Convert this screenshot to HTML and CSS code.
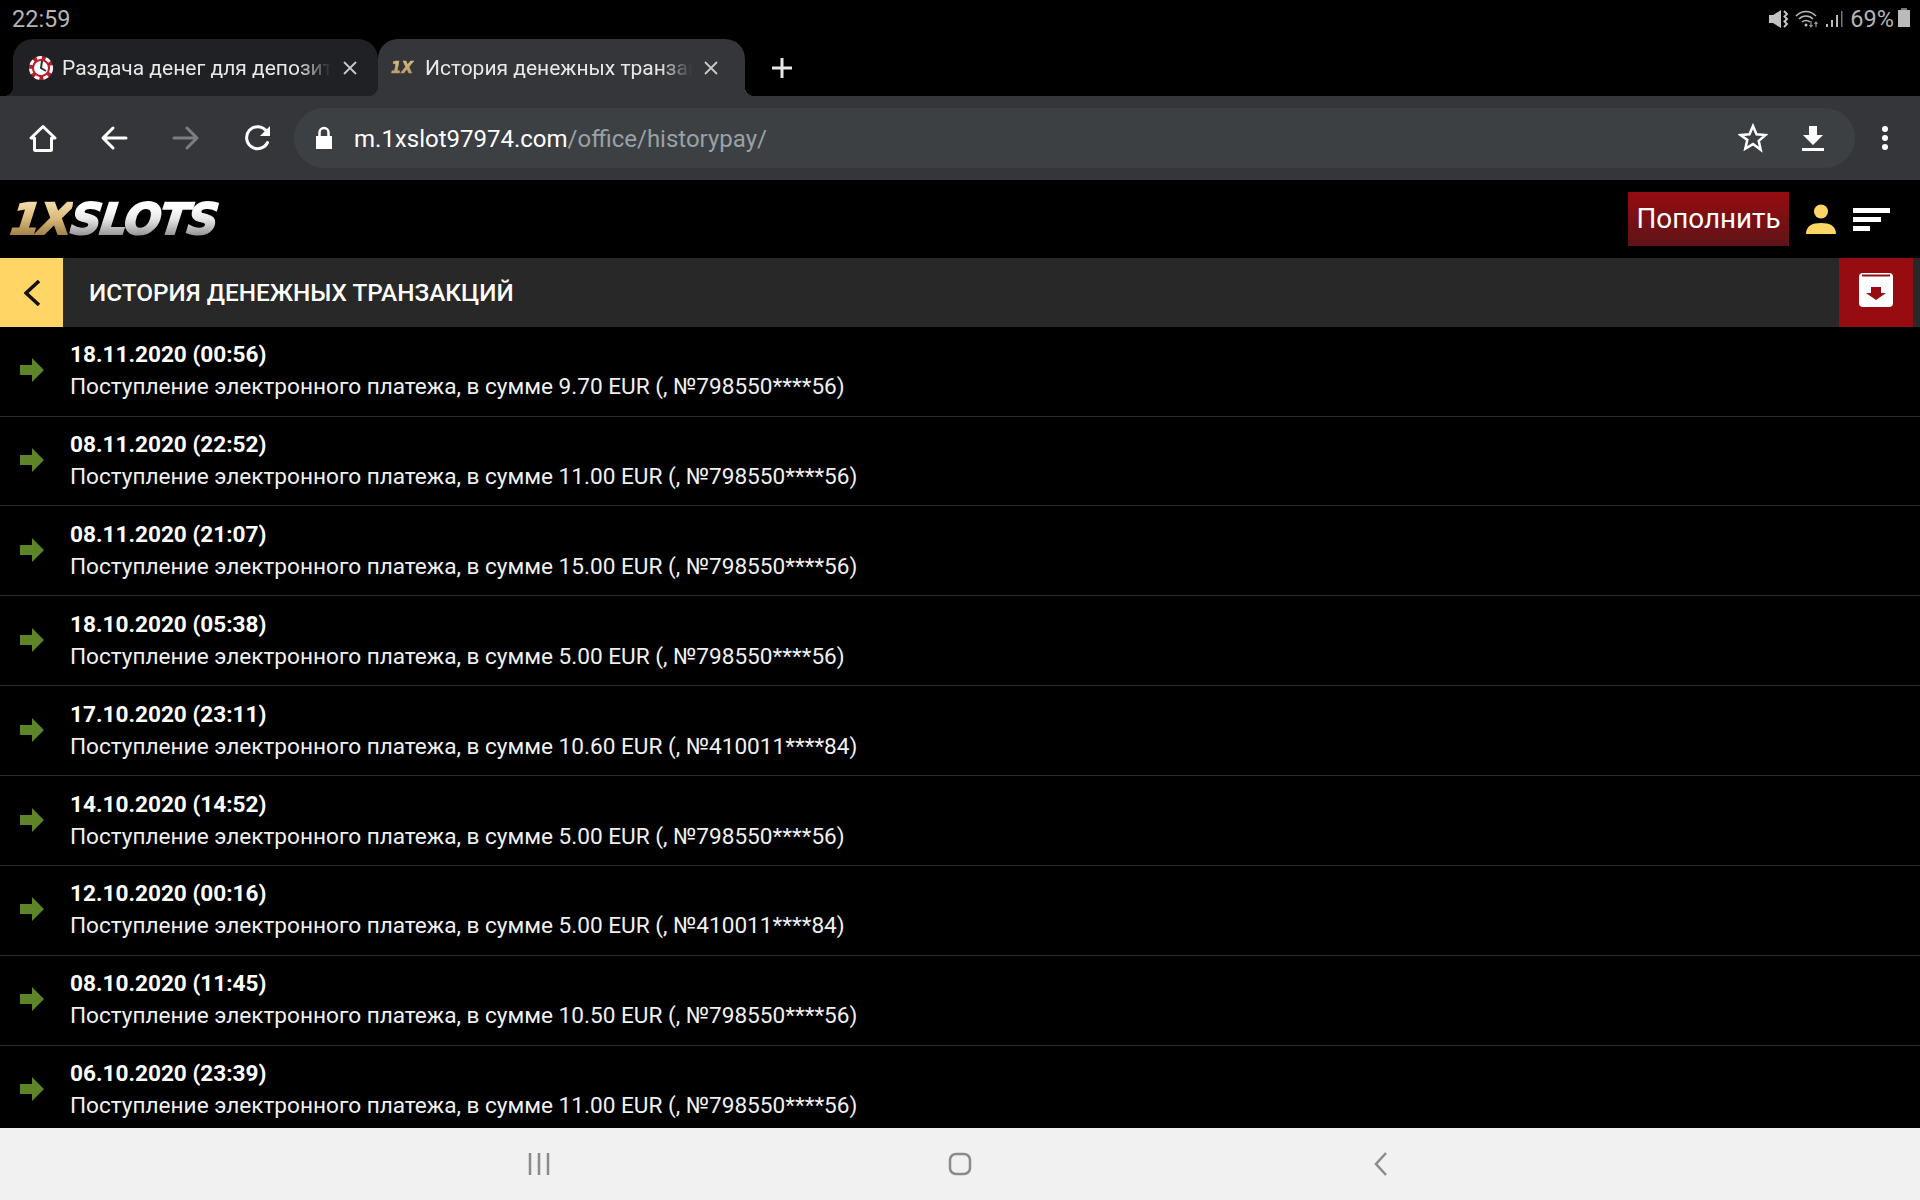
FILE: index.html
```html
<!DOCTYPE html>
<html lang="ru">

<head>
    <meta charset="UTF-8">
    <title>История денежных транзакций</title>
    <link rel="stylesheet" href="styles.css">
</head>

<body>
    <div class="screen">

        <!-- status bar -->
        <div class="status">
            <span class="clock">22:59</span>
            <div class="status_right">
                <svg class="st_mute" viewBox="0 0 20 18"><path d="M0 5h4l8-5v18l-8-5H0z" fill="#c4c4c4"/><path d="M15 1l3 3-2.500 2.500 2.500 2.500-2.500 2.500 2.500 2.500-3 3" fill="none" stroke="#c4c4c4" stroke-width="2"/></svg>
                <svg class="st_wifi" viewBox="0 0 24 18"><path d="M1 6c6-6 14-6 20 0M4 9c4-4 10-4 14 0M7 12c2.500-2 5.500-2 8 0" fill="none" stroke="#bbb" stroke-width="1.500"/><circle cx="11" cy="15" r="1.500" fill="#bbb"/><path d="M16 11v6M14.500 15l1.500 2 1.500-2M21 17v-5M19.500 14l1.500-2 1.500 2" fill="none" stroke="#999" stroke-width="1.200"/></svg>
                <svg class="st_signal" viewBox="0 0 18 18"><path d="M1 14h2v3H1zM6 10h2v7H6zM11 5h2v12h-2z" fill="#bbb"/><path d="M16 1h1.500v16H16z" fill="#777"/></svg>
                <span class="battery_pct">69%</span>
                <span class="battery"></span>
            </div>
        </div>

        <!-- browser tabs -->
        <div class="tabs">
            <div class="tab">
                <svg class="favicon" viewBox="0 0 24 24">
                    <circle cx="12" cy="12" r="12" fill="#b3202c"/>
                    <circle cx="12" cy="12" r="10.500" fill="none" stroke="#fff" stroke-width="3" stroke-dasharray="5 4"/>
                    <circle cx="12" cy="12" r="7" fill="#fff"/>
                    <path d="M13 5l-1 7 5 3" fill="none" stroke="#333" stroke-width="2"/>
                </svg>
                <span class="tab_title">Раздача денег для депозит</span>
                <svg class="tab_close" viewBox="0 0 16 16"><path d="M2 2l12 12M14 2L2 14"/></svg>
            </div>
            <div class="tab active">
                <span class="favicon_x">1X</span>
                <span class="tab_title">История денежных транзак</span>
                <svg class="tab_close" viewBox="0 0 16 16"><path d="M2 2l12 12M14 2L2 14"/></svg>
            </div>
            <svg class="tab_new" viewBox="0 0 22 22"><path d="M11 1v20M1 11h20"/></svg>
        </div>

        <!-- browser toolbar -->
        <div class="toolbar">
            <svg class="tool" viewBox="0 0 30 30"><path d="M16 3.500L4 15h3.500v11.500a1 1 0 0 0 1 1h15a1 1 0 0 0 1-1V15H28z"/></svg>
            <svg class="tool" viewBox="0 0 30 30"><path d="M27 15H5M14 5L4 15l10 10"/></svg>
            <svg class="tool dim" viewBox="0 0 30 30"><path d="M3 15h22M16 5l10 10-10 10"/></svg>
            <svg class="tool" viewBox="0 0 30 30"><path d="M24.500 19.500A11 11 0 1 1 23 7.500"/><path class="solid" d="M27 3v10H17z"/></svg>
            <div class="omnibox">
                <svg class="lock" viewBox="0 0 18 24"><path d="M1 10h16v13H1z"/><path class="ring" d="M4.500 10V6.500a4.500 4.500 0 0 1 9 0V10"/></svg>
                <span class="url">m.1xslot97974.com<span class="url_path">/office/historypay/</span></span>
                <svg class="star" viewBox="0 0 30 30"><path d="M15 3l3.500 8.300 9 .7-6.800 5.900 2 8.800L15 21.100l-7.700 4.600 2-8.800L2.500 12l9-.7z"/></svg>
                <svg class="dl" viewBox="0 0 24 28"><path d="M8 2h8v9h6L12 21 2 11h6zM1 24h22v3H1z"/></svg>
            </div>
            <div class="kebab"><i></i><i></i><i></i></div>
        </div>

        <!-- site header -->
        <header class="site_head">
            <div class="logo"><span class="logo_x">1X</span><span class="logo_s">SLOTS</span></div>
            <div class="head_right">
                <button class="btn_topup">Пополнить</button>
                <svg class="user" viewBox="0 0 30 30"><circle cx="15" cy="7.500" r="7"/><path d="M0 30c0-8 6-11 15-11s15 3 15 11z"/></svg>
                <div class="menu"><i></i><i></i><i></i></div>
            </div>
        </header>

        <div class="title_bar">
            <div class="back">
                <svg viewBox="0 0 16 26"><path d="M15 1L2 13l13 12"/></svg>
            </div>
            <h1>ИСТОРИЯ ДЕНЕЖНЫХ ТРАНЗАКЦИЙ</h1>
            <div class="archive">
                <svg viewBox="0 0 34 34"><path class="box" d="M4 0h26a4 4 0 0 1 4 4v26a4 4 0 0 1-4 4H4a4 4 0 0 1-4-4V4a4 4 0 0 1 4-4z"/><path class="mark" d="M3 1.500h28v2H3zM12 14h10v6h5L17 27 7 20h5z"/></svg>
            </div>
        </div>

        <!-- transactions -->
        <div class="list">
            <div class="row">
                <svg class="arrow" viewBox="0 0 24 24"><path d="M0 7h12V0l12 12-12 12v-7H0z"/></svg>
                <div>
                    <div class="date">18.11.2020 (00:56)</div>
                    <div class="desc">Поступление электронного платежа, в сумме 9.70 EUR (, №798550****56)</div>
                </div>
            </div>
            <div class="row">
                <svg class="arrow" viewBox="0 0 24 24"><path d="M0 7h12V0l12 12-12 12v-7H0z"/></svg>
                <div>
                    <div class="date">08.11.2020 (22:52)</div>
                    <div class="desc">Поступление электронного платежа, в сумме 11.00 EUR (, №798550****56)</div>
                </div>
            </div>
            <div class="row">
                <svg class="arrow" viewBox="0 0 24 24"><path d="M0 7h12V0l12 12-12 12v-7H0z"/></svg>
                <div>
                    <div class="date">08.11.2020 (21:07)</div>
                    <div class="desc">Поступление электронного платежа, в сумме 15.00 EUR (, №798550****56)</div>
                </div>
            </div>
            <div class="row">
                <svg class="arrow" viewBox="0 0 24 24"><path d="M0 7h12V0l12 12-12 12v-7H0z"/></svg>
                <div>
                    <div class="date">18.10.2020 (05:38)</div>
                    <div class="desc">Поступление электронного платежа, в сумме 5.00 EUR (, №798550****56)</div>
                </div>
            </div>
            <div class="row">
                <svg class="arrow" viewBox="0 0 24 24"><path d="M0 7h12V0l12 12-12 12v-7H0z"/></svg>
                <div>
                    <div class="date">17.10.2020 (23:11)</div>
                    <div class="desc">Поступление электронного платежа, в сумме 10.60 EUR (, №410011****84)</div>
                </div>
            </div>
            <div class="row">
                <svg class="arrow" viewBox="0 0 24 24"><path d="M0 7h12V0l12 12-12 12v-7H0z"/></svg>
                <div>
                    <div class="date">14.10.2020 (14:52)</div>
                    <div class="desc">Поступление электронного платежа, в сумме 5.00 EUR (, №798550****56)</div>
                </div>
            </div>
            <div class="row">
                <svg class="arrow" viewBox="0 0 24 24"><path d="M0 7h12V0l12 12-12 12v-7H0z"/></svg>
                <div>
                    <div class="date">12.10.2020 (00:16)</div>
                    <div class="desc">Поступление электронного платежа, в сумме 5.00 EUR (, №410011****84)</div>
                </div>
            </div>
            <div class="row">
                <svg class="arrow" viewBox="0 0 24 24"><path d="M0 7h12V0l12 12-12 12v-7H0z"/></svg>
                <div>
                    <div class="date">08.10.2020 (11:45)</div>
                    <div class="desc">Поступление электронного платежа, в сумме 10.50 EUR (, №798550****56)</div>
                </div>
            </div>
            <div class="row">
                <svg class="arrow" viewBox="0 0 24 24"><path d="M0 7h12V0l12 12-12 12v-7H0z"/></svg>
                <div>
                    <div class="date">06.10.2020 (23:39)</div>
                    <div class="desc">Поступление электронного платежа, в сумме 11.00 EUR (, №798550****56)</div>
                </div>
            </div>
        </div>

        <!-- android nav -->
        <div class="navbar">
            <svg class="nav_icon" viewBox="0 0 24 26"><path d="M3 2v22M12 2v22M21 2v22"/></svg>
            <svg class="nav_icon" viewBox="0 0 24 26"><rect x="2" y="3" width="20" height="20" rx="6"/></svg>
            <svg class="nav_icon" viewBox="0 0 24 26"><path d="M17 2L7 13l10 11"/></svg>
        </div>
    </div>
</body>

</html>
```

FILE: styles.css
```css
* {
    box-sizing: border-box;
}

body {
    margin: 0;
    background-color: #000;
    color: #fff;
    font-family: Roboto, "Liberation Sans", sans-serif;
}

.screen {
    display: flex;
    flex-direction: column;
    height: 1200px;
    overflow: hidden;
}

/* Status bar */
.status {
    display: flex;
    justify-content: space-between;
    align-items: center;
    height: 39px;
    padding: 0 10px 2px 12px;
    color: #b5b5b5;
    font-size: 23.500px;
}

.status_right {
    display: flex;
    align-items: center;
}

.st_mute {
    width: 20px;
    height: 18px;
    margin-right: 6px;
}

.st_wifi {
    width: 24px;
    height: 18px;
    margin-right: 6px;
}

.st_signal {
    width: 18px;
    height: 18px;
    margin-right: 7px;
}

.battery_pct {
    margin-right: 4px;
}

.battery {
    position: relative;
    display: block;
    width: 12px;
    height: 17px;
    background-color: #bbb;
}

.battery::before {
    content: "";
    position: absolute;
    left: 3px;
    top: -2px;
    width: 6px;
    height: 2px;
    background-color: #777;
}

/* Tabs */
.tabs {
    display: flex;
    align-items: flex-end;
    height: 57px;
    padding-left: 13px;
}

.tab {
    position: relative;
    display: flex;
    align-items: center;
    width: 365px;
    height: 57px;
    padding: 0 20px 0 16px;
    background-color: #202124;
    border-radius: 20px 20px 0 0;
}

/* little flares at the foot of a tab */
.tab::before,
.tab::after {
    content: "";
    position: absolute;
    bottom: 0;
    width: 10px;
    height: 10px;
}

.tab::before {
    left: -10px;
    background: radial-gradient(circle at 0 0, transparent 10px, #202124 10.500px);
}

.tab.active {
    width: 367px;
    padding: 0 26px 0 13px;
    background-color: #35363a;
}

.tab.active::before {
    background: radial-gradient(circle at 0 0, transparent 10px, #35363a 10.500px);
}

.tab.active::after {
    right: -10px;
    background: radial-gradient(circle at 100% 0, transparent 10px, #35363a 10.500px);
}

.favicon {
    flex: none;
    width: 24px;
    height: 24px;
    margin-right: 9px;
}

.favicon_x {
    flex: none;
    width: 25px;
    margin-right: 9px;
    background: linear-gradient(to bottom, #dcbf85, #b8955a);
    -webkit-background-clip: text;
    background-clip: text;
    color: transparent;
    font-family: "DejaVu Sans", sans-serif;
    font-size: 15px;
    font-weight: 700;
    font-style: italic;
    -webkit-text-stroke: 0.600px transparent;
}

.tab_title {
    flex: 1;
    overflow: hidden;
    white-space: nowrap;
    font-size: 21px;
    color: #e8e8e8;
    -webkit-mask-image: linear-gradient(to right, #000 88%, transparent 100%);
    mask-image: linear-gradient(to right, #000 88%, transparent 100%);
}

.tab_close {
    flex: none;
    width: 16px;
    height: 16px;
    margin-left: 11px;
    fill: none;
    stroke: #c8c8c8;
    stroke-width: 1.800;
}

.tab_new {
    width: 22px;
    height: 22px;
    margin: 0 0 17px 26px;
    fill: none;
    stroke: #e8e8e8;
    stroke-width: 3;
}

/* Toolbar */
.toolbar {
    display: flex;
    align-items: center;
    height: 84px;
    padding: 0 32px 0 27px;
    background-color: #35363a;
}

.tool {
    flex: none;
    width: 30px;
    height: 30px;
    margin-right: 42px;
    fill: none;
    stroke: #fff;
    stroke-width: 3;
    stroke-linecap: round;
    stroke-linejoin: round;
}

.tool.dim {
    stroke: #7c7d80;
}

.tool:nth-child(4) {
    margin-right: 21px;
}

.tool .solid {
    fill: #fff;
    stroke: none;
}

.omnibox {
    display: flex;
    align-items: center;
    flex: 1;
    height: 60px;
    padding: 0 30px 0 21px;
    background-color: #3c4043;
    border-radius: 30px;
}

.lock {
    flex: none;
    width: 18px;
    height: 24px;
    margin-right: 21px;
    fill: #fff;
}

.lock .ring {
    fill: none;
    stroke: #fff;
    stroke-width: 2.500;
}

.url {
    flex: 1;
    padding-top: 2px;
    font-size: 24px;
    color: #fff;
}

.url_path {
    color: #9aa0a6;
}

.star {
    width: 30px;
    height: 30px;
    margin-right: 33px;
    fill: none;
    stroke: #fff;
    stroke-width: 2.500;
}

.dl {
    width: 24px;
    height: 28px;
    fill: #fff;
}

.kebab {
    display: flex;
    flex-direction: column;
    gap: 3px;
    margin-left: 27px;
}

.kebab i {
    display: block;
    width: 6px;
    height: 6px;
    border-radius: 50%;
    background-color: #fff;
}

/* Site header */
.site_head {
    display: flex;
    justify-content: space-between;
    align-items: center;
    height: 78px;
    padding: 0 30px 0 11px;
}

.logo {
    transform: skewX(-7deg);
    font-family: "DejaVu Sans", sans-serif;
    font-size: 43px;
    font-weight: 700;
    font-style: italic;
    letter-spacing: -1.500px;
    -webkit-text-stroke: 2px transparent;
}

.logo_x {
    background: linear-gradient(to bottom, #f0d9a6 20%, #d9b878 50%, #9c7c45 85%);
    -webkit-background-clip: text;
    background-clip: text;
    color: transparent;
}

.logo_s {
    background: linear-gradient(to bottom, #fff 25%, #e8e8e8 50%, #8f8f8f 85%);
    -webkit-background-clip: text;
    background-clip: text;
    color: transparent;
}

.head_right {
    display: flex;
    align-items: center;
}

.btn_topup {
    width: 161px;
    height: 54px;
    padding: 0 0 2px;
    border: none;
    background: linear-gradient(to bottom, #960c10, #5e1418);
    color: #fff;
    font-family: inherit;
    font-size: 27.800px;
}

.user {
    width: 30px;
    height: 30px;
    margin: 0 17px;
    fill: #ffd666;
}

.menu {
    display: flex;
    flex-direction: column;
    gap: 4px;
    width: 37px;
}

.menu i {
    display: block;
    height: 5px;
    background-color: #fff;
}

.menu i:nth-child(2) {
    width: 28px;
}

.menu i:nth-child(3) {
    width: 17px;
}

/* Title bar */
.title_bar {
    display: flex;
    align-items: center;
    flex: none;
    height: 69px;
    padding-right: 7px;
    background-color: #282828;
}

.back {
    display: flex;
    align-items: center;
    justify-content: center;
    width: 63px;
    height: 100%;
    background-color: #ffd666;
}

.back svg {
    width: 16px;
    height: 26px;
    fill: none;
    stroke: #111;
    stroke-width: 3.500;
}

.title_bar h1 {
    flex: 1;
    margin: 0 0 0 26px;
    font-size: 24.350px;
    font-weight: 500;
}

.archive {
    display: flex;
    align-items: center;
    justify-content: center;
    width: 74px;
    height: 100%;
    padding-bottom: 5px;
    background-color: #960c10;
}

.archive svg {
    width: 34px;
    height: 34px;
}

.archive .box {
    fill: #fff;
}

.archive .mark {
    fill: #960c10;
}

/* Transactions */
.list {
    flex: 1;
    overflow: hidden;
}

.row {
    display: flex;
    align-items: center;
    height: 89.900px;
    padding-left: 20px;
    border-bottom: 1px solid #2b2b2b;
}

.row:first-child {
    height: 89.500px;
}

.arrow {
    flex: none;
    width: 24px;
    height: 24px;
    margin: 0 26px 2px 0;
    fill: #5d8528;
}

.date {
    font-size: 22.600px;
    font-weight: 700;
    line-height: 32px;
}

.desc {
    font-size: 22.600px;
    line-height: 32px;
    color: #f0f0f0;
}

/* Android navigation */
.navbar {
    display: flex;
    justify-content: center;
    align-items: center;
    gap: 397px;
    flex: none;
    height: 72px;
    background-color: #f1f1f1;
}

.nav_icon {
    width: 24px;
    height: 26px;
    fill: none;
    stroke: #8a8a8a;
    stroke-width: 2.500;
}
```
